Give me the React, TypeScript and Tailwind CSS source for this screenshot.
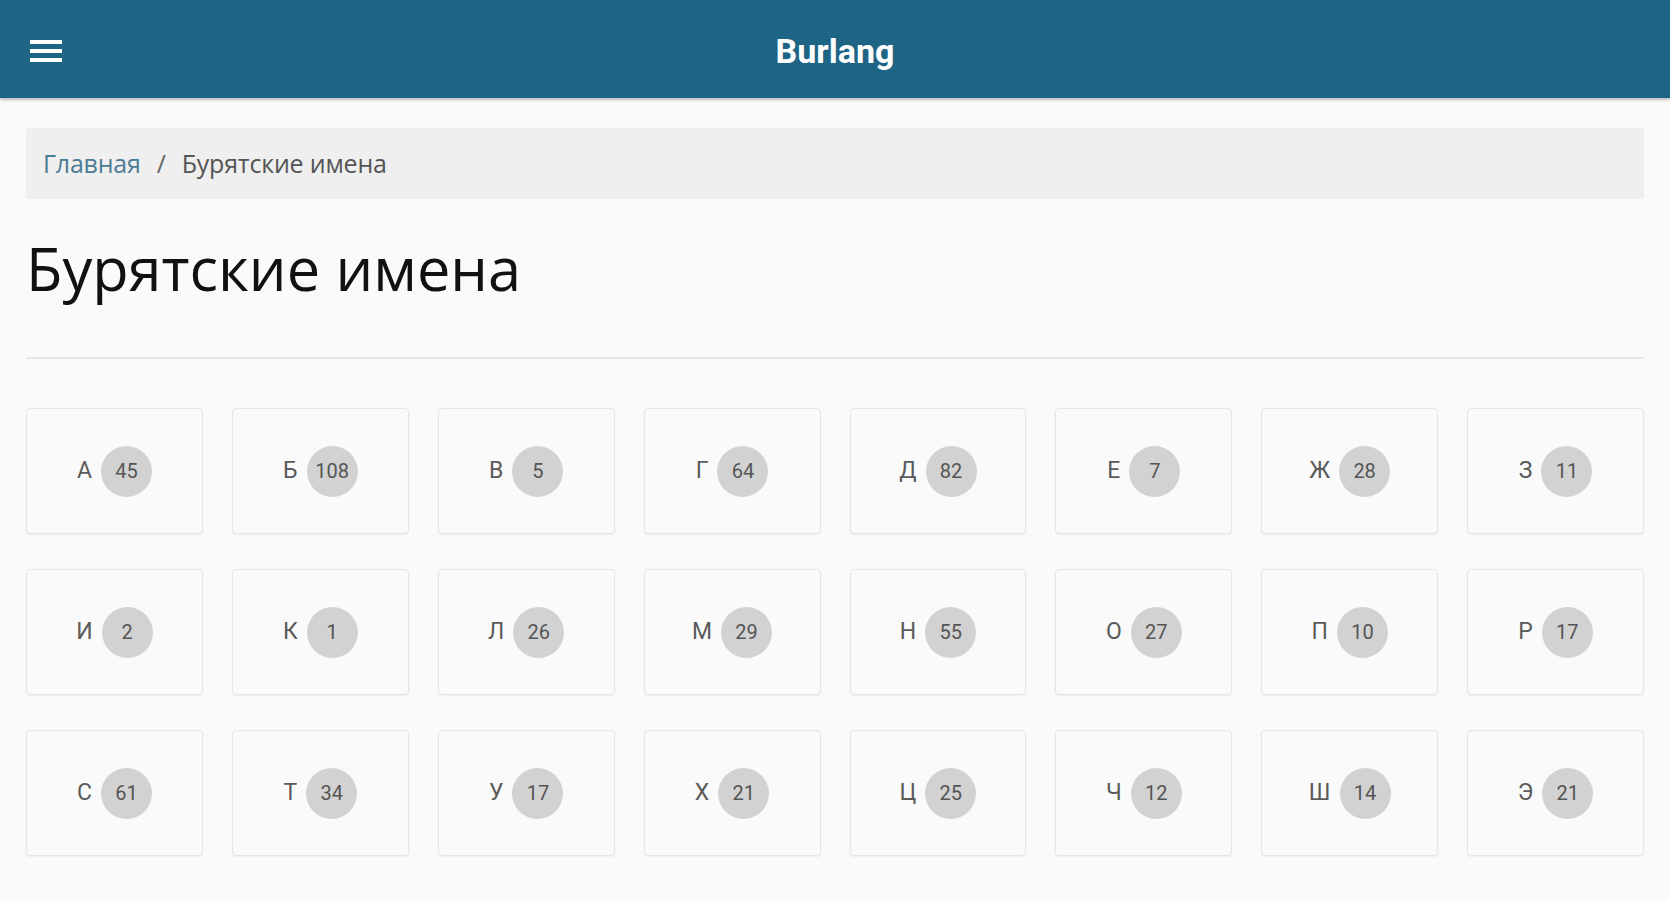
import React from 'react';

const letters: [string, number][] = [
  ['А', 45], ['Б', 108], ['В', 5], ['Г', 64], ['Д', 82], ['Е', 7], ['Ж', 28], ['З', 11],
  ['И', 2], ['К', 1], ['Л', 26], ['М', 29], ['Н', 55], ['О', 27], ['П', 10], ['Р', 17],
  ['С', 61], ['Т', 34], ['У', 17], ['Х', 21], ['Ц', 25], ['Ч', 12], ['Ш', 14], ['Э', 21],
];

const MenuIcon = () => (
  <svg width="34" height="26" viewBox="0 0 34 26" fill="#ffffff">
    <rect x="1" y="2" width="32" height="4" />
    <rect x="1" y="11" width="32" height="4" />
    <rect x="1" y="20" width="32" height="4" />
  </svg>
);

const LetterCard: React.FC<{ letter: string; count: number }> = ({ letter, count }) => (
  <a
    href="#"
    className="flex h-[126px] items-center justify-center gap-[9px] rounded-[4px] border border-[#e6e6e6] bg-[#fafafa] shadow-[0_1px_2px_rgba(0,0,0,0.06)]"
  >
    <span className="text-[23px] text-[#5a5a5a]">{letter}</span>
    <span className="flex h-[51px] w-[51px] items-center justify-center rounded-full bg-[#d2d2d2] text-[20px] text-[#555555]">
      {count}
    </span>
  </a>
);

export default function App() {
  return (
    <div className="min-h-[900px] bg-[#fafafa] font-['Roboto',sans-serif]">
      {/* Top bar */}
      <header className="relative flex h-[98px] items-center justify-center bg-[#1e6585] shadow-[0_2px_3px_rgba(0,0,0,0.25)]">
        <button className="absolute left-[29px] top-[38px]">
          <MenuIcon />
        </button>
        <h1 className="pt-[5px] text-[34px] font-bold text-white">Burlang</h1>
      </header>

      <main className="px-[26px] pt-[30px]">
        {/* Breadcrumb */}
        <nav className="flex h-[71px] items-center rounded-[3px] bg-[#efefef] px-[17px] font-['Open_Sans',sans-serif] text-[25px] tracking-[-0.2px]">
          <a href="#" className="text-[#4d7d96]">Главная</a>
          <span className="px-[16px] text-[#666666]">/</span>
          <span className="text-[#555555]">Бурятские имена</span>
        </nav>

        <h2 className="mt-[30px] font-['Open_Sans',sans-serif] text-[59.5px] leading-[78px] text-[#111111]">
          Бурятские имена
        </h2>

        <hr className="mt-[50px] border-t-2 border-[#e8e8e8]" />

        {/* Letters grid */}
        <div className="mt-[49px] grid grid-cols-8 gap-x-[29px] gap-y-[35px]">
          {letters.map(([l, c]) => (
            <LetterCard key={l} letter={l} count={c} />
          ))}
        </div>
      </main>
    </div>
  );
}
